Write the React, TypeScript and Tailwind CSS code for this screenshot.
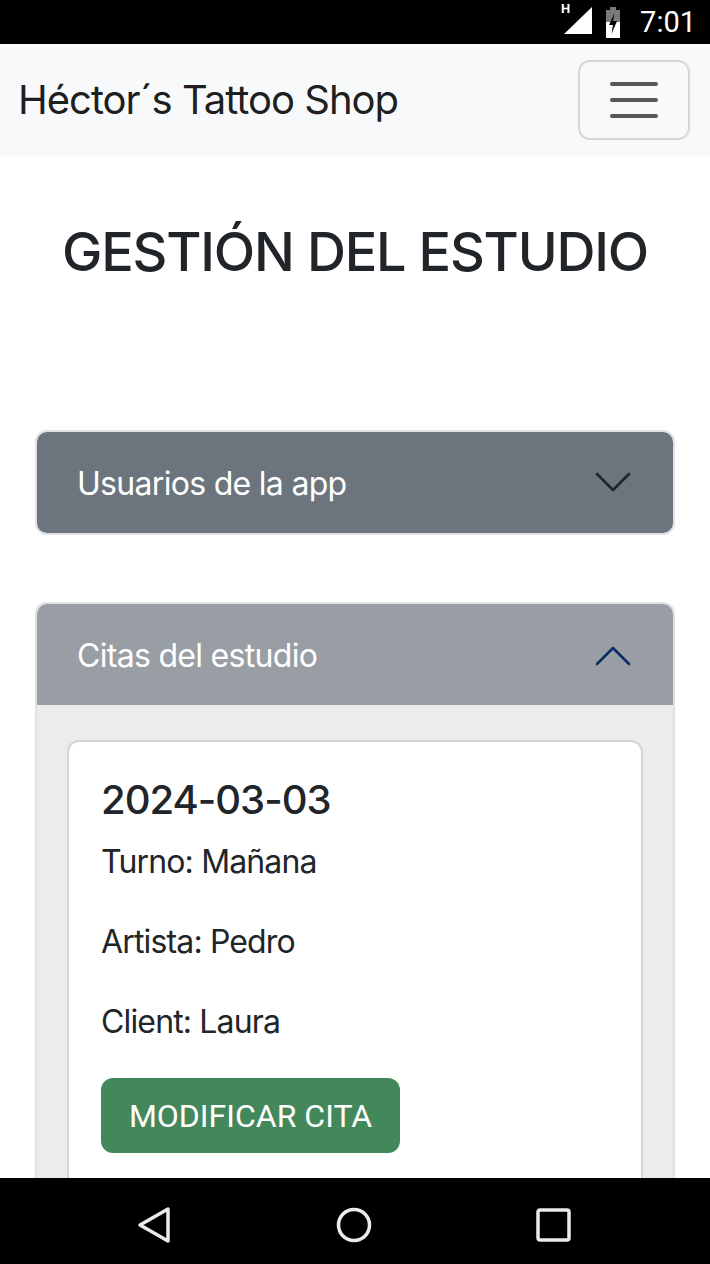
import React from "react";

const inter = { fontFamily: "Inter, 'Noto Sans', sans-serif" };

function ChevronDown({ color }: { color: string }) {
  return (
    <svg width="36" height="22" viewBox="0 0 36 22" fill="none">
      <path d="M2 2 L18 18 L34 2" stroke={color} strokeWidth="2.6" strokeLinecap="round" strokeLinejoin="round" />
    </svg>
  );
}

function ChevronUp({ color }: { color: string }) {
  return (
    <svg width="36" height="22" viewBox="0 0 36 22" fill="none">
      <path d="M2 20 L18 4 L34 20" stroke={color} strokeWidth="2.6" strokeLinecap="round" strokeLinejoin="round" />
    </svg>
  );
}

export default function App() {
  return (
    <div className="w-[710px] h-[1264px] flex flex-col overflow-hidden bg-white" style={inter}>
      {/* Status bar */}
      <div className="h-[44px] bg-black flex items-center justify-end shrink-0 pr-[14px]">
        <div className="relative w-[32px] h-[44px] mr-[14px]">
          <span className="absolute left-[1px] top-[2px] text-white text-[13px] font-bold leading-none" style={{ fontFamily: "Roboto, sans-serif" }}>H</span>
          <svg className="absolute left-[4px] top-[7px]" width="28" height="27" viewBox="0 0 28 27">
            <path d="M28 0 L28 27 L0 27 Z" fill="white" />
          </svg>
        </div>
        <svg width="14" height="31" viewBox="0 0 14 31" className="mr-[20px]">
          <rect x="4" y="0" width="6" height="3" fill="#7a7a7a" />
          <rect x="0" y="3" width="14" height="13" fill="#7a7a7a" />
          <rect x="0" y="15" width="14" height="16" fill="white" />
          <path d="M8.5 6 L3 18 L7 18 L5.5 27 L11 14 L7 14 L8.5 6 Z" fill="black" />
        </svg>
        <span className="text-white text-[29px] leading-none" style={{ fontFamily: "Roboto, sans-serif" }}>7:01</span>
      </div>

      <div className="flex-1 overflow-hidden">
        {/* Navbar */}
        <div className="h-[112px] bg-[#f8f9fa] flex items-center justify-between pl-[18px] pr-[20px]">
          <span className="text-[40px] tracking-[-1px] text-[#000000e6] leading-none">Héctor´s Tattoo Shop</span>
          <div className="w-[112px] h-[80px] border-2 border-[#d6d7d8] rounded-[12px] flex flex-col items-center justify-center gap-[12px]">
            <div className="w-[48px] h-[4px] rounded-full bg-[#565656]" />
            <div className="w-[48px] h-[4px] rounded-full bg-[#565656]" />
            <div className="w-[48px] h-[4px] rounded-full bg-[#565656]" />
          </div>
        </div>

        {/* Heading */}
        <h1 className="mt-[63px] text-center text-[54px] leading-[65px] font-medium tracking-[-1.2px] text-[#212529]">GESTIÓN DEL ESTUDIO</h1>

        <div className="px-[35px] mt-[146px]">
          {/* Accordion 1 */}
          <div className="border-2 border-[#dee2e6] rounded-[12px] overflow-hidden">
            <div className="h-[101px] bg-[#6c757d] flex items-center justify-between pl-[40px] pr-[42px]">
              <span className="text-white text-[32px] tracking-[-0.7px] pt-[3px]">Usuarios de la app</span>
              <ChevronDown color="#212529" />
            </div>
          </div>

          {/* Accordion 2 */}
          <div className="mt-[67px] border-2 border-[#dee2e6] border-b-0 rounded-t-[12px] overflow-hidden">
            <div className="h-[101px] bg-[#999ea5] flex items-center justify-between pl-[40px] pr-[42px]">
              <span className="text-white text-[32px] tracking-[-0.7px] pt-[3px]">Citas del estudio</span>
              <ChevronUp color="#0a2d65" />
            </div>
            <div className="bg-[#ececec] px-[30px] pt-[35px] pb-[40px]">
              <div className="bg-white border-2 border-[#d4d4d4] rounded-[12px] p-[32px]">
                <h5 className="text-[40px] leading-[52px] font-medium tracking-[-1px] text-[#212529] mb-[12px]">2024-03-03</h5>
                <p className="text-[32px] leading-[48px] tracking-[-0.85px] text-[#212529] mb-[32px]">Turno: Mañana</p>
                <p className="text-[32px] leading-[48px] tracking-[-0.85px] text-[#212529] mb-[32px]">Artista: Pedro</p>
                <p className="text-[32px] leading-[48px] tracking-[-0.85px] text-[#212529] mb-[32px]">Client: Laura</p>
                <button className="w-[299px] h-[75px] rounded-[12px] bg-[#43885b] text-white text-[32px]" style={{ fontFamily: "Roboto, sans-serif" }}>MODIFICAR CITA</button>
                <div className="h-[200px]" />
              </div>
            </div>
          </div>
        </div>
      </div>

      {/* Bottom nav */}
      <div className="h-[86px] bg-black shrink-0 flex items-center justify-center">
        <div className="relative w-[710px] h-[86px]">
          <svg className="absolute left-[136px] top-[28px]" width="36" height="38" viewBox="0 0 36 38">
            <path d="M32 3 L32 35 L4 19 Z" fill="none" stroke="#ebebeb" strokeWidth="3.5" strokeLinejoin="round" />
          </svg>
          <svg className="absolute left-[336px] top-[29px]" width="36" height="36" viewBox="0 0 36 36">
            <circle cx="18" cy="18" r="15.5" fill="none" stroke="#ebebeb" strokeWidth="3.5" />
          </svg>
          <svg className="absolute left-[536px] top-[30px]" width="36" height="34" viewBox="0 0 36 34">
            <rect x="2" y="2" width="31" height="30" rx="2" fill="none" stroke="#ebebeb" strokeWidth="3.5" />
          </svg>
        </div>
      </div>
    </div>
  );
}
